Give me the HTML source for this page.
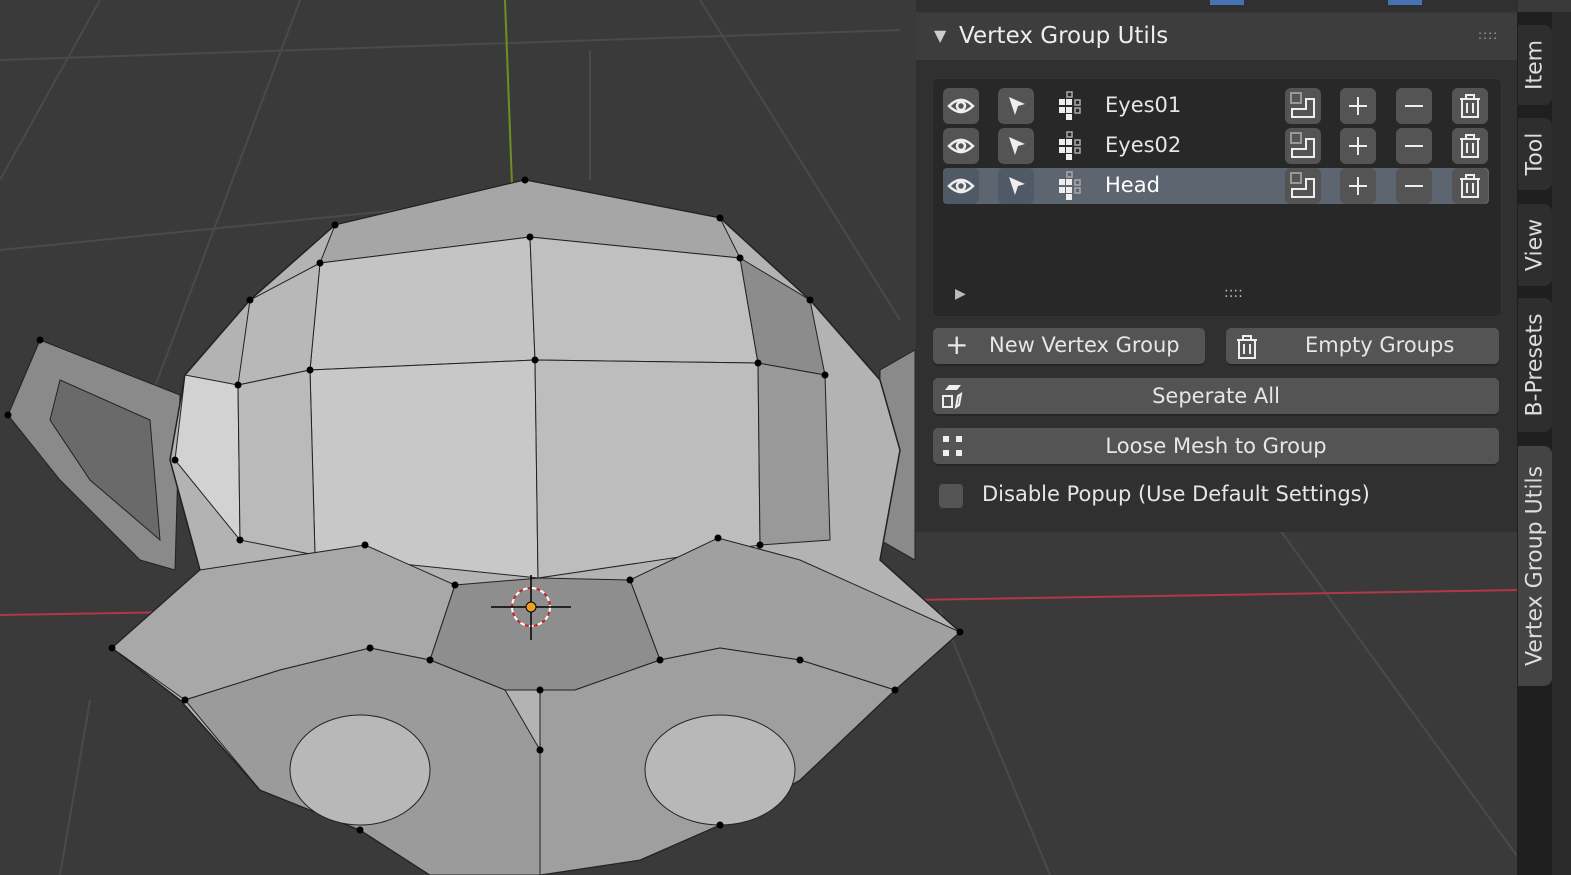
<!DOCTYPE html>
<html><head><style>
body{margin:0;width:1571px;height:875px;overflow:hidden;background:#3a3a3a;font-family:"DejaVu Sans","Liberation Sans",sans-serif;position:relative}
.abs{position:absolute}
.btn{position:absolute;background:#545454;border-radius:5px;color:#e6e6e6;font-size:21px;box-shadow:0 2px 0 #262626}
.ib{position:absolute;width:36px;height:36px;background:#545454;border-radius:6px}
.tab{position:absolute;left:1518px;width:34px;background:#2e2e2e;border-radius:0 8px 8px 0;color:#ddd;font-size:22px}
.tab span{position:absolute;left:50%;top:50%;transform:translate(-50%,-50%) rotate(-90deg);white-space:nowrap}
</style></head><body>
<svg class="abs" style="left:0;top:0" width="1571" height="875">
<g stroke="#4a4a4a" stroke-width="2" fill="none">
<line x1="100" y1="0" x2="0" y2="180"/><line x1="300" y1="0" x2="150" y2="400"/>
<line x1="700" y1="0" x2="900" y2="320"/><line x1="0" y1="250" x2="400" y2="210"/>
<line x1="0" y1="60" x2="900" y2="30"/><line x1="1280" y1="530" x2="1520" y2="860"/>
<line x1="940" y1="610" x2="1050" y2="875"/><line x1="60" y1="875" x2="90" y2="700"/>
<line x1="590" y1="50" x2="590" y2="180"/>
</g>
<line x1="505" y1="0" x2="512" y2="185" stroke="#6f8f22" stroke-width="2"/>
<line x1="0" y1="615" x2="1520" y2="590" stroke="#b03848" stroke-width="2"/>
<line x1="540" y1="840" x2="542" y2="875" stroke="#6f8f22" stroke-width="2"/>
<polygon points="40,340 180,395 175,570 140,560 60,480 8,415" fill="#8a8a8a" stroke="#222"/>
<polygon points="60,380 150,420 160,540 90,480 50,420" fill="#6a6a6a" stroke="#222"/>
<polygon points="880,370 915,350 915,560 880,540" fill="#8a8a8a" stroke="#222"/>
<polygon points="525,180 720,218 810,300 880,380 900,450 880,560 960,632 895,690 800,780 720,825 640,860 540,875 430,875 360,830 260,790 180,700 112,648 200,570 170,460 185,375 250,300 335,225" fill="#b3b3b3" stroke="#222" stroke-width="1.5"/>
<polygon points="525,180 720,218 740,258 530,237 320,263 335,225" fill="#a6a6a6" stroke="#222"/>
<polygon points="320,263 530,237 535,360 310,370" fill="#c4c4c4" stroke="#222"/>
<polygon points="530,237 740,258 758,363 535,360" fill="#c0c0c0" stroke="#222"/>
<polygon points="310,370 535,360 538,578 315,555" fill="#c8c8c8" stroke="#222"/>
<polygon points="535,360 758,363 760,545 538,578" fill="#bdbdbd" stroke="#222"/>
<polygon points="740,258 810,300 825,375 758,363" fill="#8c8c8c" stroke="#222"/>
<polygon points="758,363 825,375 830,540 760,545" fill="#999" stroke="#222"/>
<polygon points="250,300 320,263 310,370 238,385" fill="#b8b8b8" stroke="#222"/>
<polygon points="185,375 238,385 240,540 175,460" fill="#d2d2d2" stroke="#222"/>
<polygon points="238,385 310,370 315,555 240,540" fill="#bababa" stroke="#222"/>
<polygon points="112,648 200,570 365,545 455,585 430,660 370,648 280,670 185,700" fill="#a8a8a8" stroke="#222"/>
<polygon points="630,580 718,538 800,560 960,632 895,690 800,660 720,648 660,660" fill="#a0a0a0" stroke="#222"/>
<polygon points="455,585 540,578 630,580 660,660 575,690 540,690 505,690 430,660" fill="#8e8e8e" stroke="#222"/>
<polygon points="185,700 280,670 370,648 430,660 505,690 540,750 540,875 430,875 360,830 260,790" fill="#9b9b9b" stroke="#222"/>
<polygon points="540,690 575,690 660,660 720,648 800,660 895,690 800,780 720,825 640,860 540,875" fill="#9f9f9f" stroke="#222"/>
<ellipse cx="360" cy="770" rx="70" ry="55" fill="#b8b8b8" stroke="#222"/>
<ellipse cx="720" cy="770" rx="75" ry="55" fill="#b8b8b8" stroke="#222"/>
<g fill="#000">
<circle cx="525" cy="180" r="3.5"/><circle cx="720" cy="218" r="3.5"/><circle cx="530" cy="237" r="3.5"/><circle cx="320" cy="263" r="3.5"/><circle cx="740" cy="258" r="3.5"/><circle cx="335" cy="225" r="3.5"/><circle cx="535" cy="360" r="3.5"/><circle cx="758" cy="363" r="3.5"/><circle cx="310" cy="370" r="3.5"/><circle cx="238" cy="385" r="3.5"/><circle cx="825" cy="375" r="3.5"/><circle cx="240" cy="540" r="3.5"/><circle cx="760" cy="545" r="3.5"/><circle cx="365" cy="545" r="3.5"/><circle cx="718" cy="538" r="3.5"/><circle cx="455" cy="585" r="3.5"/><circle cx="630" cy="580" r="3.5"/><circle cx="112" cy="648" r="3.5"/><circle cx="960" cy="632" r="3.5"/><circle cx="430" cy="660" r="3.5"/><circle cx="660" cy="660" r="3.5"/><circle cx="895" cy="690" r="3.5"/><circle cx="185" cy="700" r="3.5"/><circle cx="540" cy="690" r="3.5"/><circle cx="370" cy="648" r="3.5"/><circle cx="800" cy="660" r="3.5"/><circle cx="540" cy="750" r="3.5"/><circle cx="720" cy="825" r="3.5"/><circle cx="360" cy="830" r="3.5"/><circle cx="40" cy="340" r="3.5"/><circle cx="8" cy="415" r="3.5"/><circle cx="175" cy="460" r="3.5"/><circle cx="250" cy="300" r="3.5"/><circle cx="810" cy="300" r="3.5"/>
</g>
<circle cx="531" cy="607" r="19" fill="none" stroke="#fff" stroke-width="2" stroke-dasharray="5 4"/>
<circle cx="531" cy="607" r="19" fill="none" stroke="#d02020" stroke-width="2" stroke-dasharray="4 5" stroke-dashoffset="4"/>
<line x1="491" y1="607" x2="571" y2="607" stroke="#000" stroke-width="1.5"/><line x1="531" y1="575" x2="531" y2="640" stroke="#000" stroke-width="1.5"/>
<circle cx="531" cy="607" r="5" fill="#f0a020" stroke="#000"/>
</svg>
<div class="abs" style="left:916px;top:0;width:602px;height:12px;background:#303030"></div>
<div class="abs" style="left:1210px;top:0;width:34px;height:5px;background:#4772b3"></div>
<div class="abs" style="left:1388px;top:0;width:34px;height:5px;background:#4772b3"></div>
<div class="abs" style="left:916px;top:14px;width:601px;height:46px;background:#3d3d3d"></div>
<div class="abs" style="left:934px;top:26px;color:#ccc;font-size:16px">▼</div>
<div class="abs" style="left:959px;top:23px;color:#eee;font-size:23px">Vertex Group Utils</div>
<div class="abs" style="left:1478px;top:28px;color:#aaa;font-size:12px;letter-spacing:1px">::::</div>
<div class="abs" style="left:916px;top:60px;width:601px;height:472px;background:#303030"></div>
<div class="abs" style="left:932px;top:78px;width:568px;height:237px;background:#282828;border-radius:6px;border:1px solid #333"></div>
<div class="abs" style="left:943px;top:168px;width:546px;height:36px;background:#5d6570;border-radius:4px"></div>
<div class="abs" style="left:955px;top:286px;color:#bbb;font-size:14px">▶</div>
<div class="abs" style="left:1224px;top:285px;color:#bbb;font-size:14px">::::</div>

<div class="ib" style="left:943px;top:88px"></div><div class="ib" style="left:998px;top:88px"></div>
<div class="ib" style="left:943px;top:128px"></div><div class="ib" style="left:998px;top:128px"></div>
<div class="ib" style="left:943px;top:168px;background:#505a66"></div><div class="ib" style="left:998px;top:168px;background:#505a66"></div>
<div class="ib" style="left:1285px;top:88px"></div><div class="ib" style="left:1340px;top:88px"></div><div class="ib" style="left:1396px;top:88px"></div><div class="ib" style="left:1452px;top:88px"></div>
<div class="ib" style="left:1285px;top:128px"></div><div class="ib" style="left:1340px;top:128px"></div><div class="ib" style="left:1396px;top:128px"></div><div class="ib" style="left:1452px;top:128px"></div>
<div class="ib" style="left:1285px;top:168px"></div><div class="ib" style="left:1340px;top:168px"></div><div class="ib" style="left:1396px;top:168px"></div><div class="ib" style="left:1452px;top:168px"></div>
<svg class="abs" style="left:0;top:0" width="1571" height="875">
<defs>
<g id="eye" fill="none" stroke="#eee" stroke-width="2.5"><path d="M-12 0 Q0 -12 12 0 Q0 12 -12 0Z"/><circle r="4"/></g>
<g id="arr" fill="#eee"><path d="M-7 -9 L9 -2 L2 0 L-1 9Z"/></g>
<g id="grp"><rect x="-14" y="-7" width="6" height="6" fill="#eee"/><rect x="-7" y="-7" width="6" height="6" fill="#eee"/><rect x="-14" y="1" width="6" height="6" fill="#eee"/><rect x="-7" y="1" width="6" height="6" fill="#eee"/><rect x="-6" y="-14" width="5" height="5" fill="none" stroke="#aaa" stroke-width="1.5"/><rect x="-7" y="8" width="6" height="6" fill="#eee"/><rect x="2" y="-6" width="5" height="5" fill="none" stroke="#aaa" stroke-width="1.5"/><rect x="2" y="2" width="5" height="5" fill="none" stroke="#aaa" stroke-width="1.5"/></g>
<g id="cp" fill="none" stroke-width="2"><rect x="-12" y="-13" width="10" height="10" stroke="#999"/><path d="M-11 11 H11 V-7 H3 V3 H-11Z" stroke="#eee"/></g>
<g id="pl" stroke="#eee" stroke-width="2"><path d="M-9 0H9M0 -9V9"/></g>
<g id="mi" stroke="#eee" stroke-width="2"><path d="M-9 0H9"/></g>
<g id="tr" fill="none" stroke="#eee" stroke-width="2"><path d="M-10 -7H10M-4 -7V-11H4V-7M-8 -7V11H8V-7M-3 -3V7M3 -3V7"/></g>
</defs>
<use href="#eye" x="961" y="106"/><use href="#eye" x="961" y="146"/><use href="#eye" x="961" y="186"/>
<use href="#arr" x="1016" y="106"/><use href="#arr" x="1016" y="146"/><use href="#arr" x="1016" y="186"/>
<use href="#grp" x="1073" y="106"/><use href="#grp" x="1073" y="146"/><use href="#grp" x="1073" y="186"/>
<use href="#cp" x="1303" y="106"/><use href="#cp" x="1303" y="146"/><use href="#cp" x="1303" y="186"/>
<use href="#pl" x="1358" y="106"/><use href="#pl" x="1358" y="146"/><use href="#pl" x="1358" y="186"/>
<use href="#mi" x="1414" y="106"/><use href="#mi" x="1414" y="146"/><use href="#mi" x="1414" y="186"/>
<use href="#tr" x="1470" y="106"/><use href="#tr" x="1470" y="146"/><use href="#tr" x="1470" y="186"/>
</svg>
<div class="abs" style="left:1105px;top:93px;color:#e6e6e6;font-size:21px">Eyes01</div>
<div class="abs" style="left:1105px;top:133px;color:#e6e6e6;font-size:21px">Eyes02</div>
<div class="abs" style="left:1105px;top:173px;color:#fff;font-size:21px">Head</div>

<div class="btn" style="left:933px;top:328px;width:272px;height:36px"><span style="position:absolute;left:12px;top:0px;font-size:28px">+</span><span style="position:absolute;left:56px;top:5px">New Vertex Group</span></div>
<div class="btn" style="left:1226px;top:328px;width:273px;height:36px"><svg style="position:absolute;left:9px;top:6px" width="24" height="26"><g transform="translate(12,13)"><use href="#tr"/></g></svg><span style="position:absolute;left:79px;top:5px">Empty Groups</span></div>
<div class="btn" style="left:933px;top:378px;width:566px;height:36px;text-align:center;line-height:36px"><svg style="position:absolute;left:6px;top:4px" width="32" height="30"><path d="M6 8 L10 3 H22 L18 8Z" fill="#eee"/><rect x="4" y="14" width="9" height="11" fill="none" stroke="#eee" stroke-width="2"/><path d="M17 25 L19 14 L22 12 L20 23Z" fill="none" stroke="#eee" stroke-width="2"/></svg>Seperate All</div>
<div class="btn" style="left:933px;top:428px;width:566px;height:36px;text-align:center;line-height:36px"><svg style="position:absolute;left:8px;top:6px" width="26" height="26"><rect x="2" y="2" width="6" height="6" fill="#eee"/><rect x="15" y="2" width="6" height="6" fill="#eee"/><rect x="2" y="16" width="6" height="6" fill="#eee"/><rect x="15" y="16" width="6" height="6" fill="#eee"/></svg>Loose Mesh to Group</div>
<div class="abs" style="left:939px;top:484px;width:24px;height:24px;background:#545454;border-radius:4px"></div>
<div class="abs" style="left:982px;top:482px;color:#e6e6e6;font-size:21px">Disable Popup (Use Default Settings)</div>

<div class="abs" style="left:1517px;top:12px;width:54px;height:863px;background:#1f1f1f"></div>
<div class="abs" style="left:1552px;top:12px;width:19px;height:863px;background:#2a2a2a"></div>
<div class="tab" style="top:25px;height:80px"><span>Item</span></div>
<div class="tab" style="top:118px;height:72px"><span>Tool</span></div>
<div class="tab" style="top:204px;height:82px"><span>View</span></div>
<div class="tab" style="top:298px;height:134px"><span>B-Presets</span></div>
<div class="tab" style="top:446px;height:240px;background:#444"><span>Vertex Group Utils</span></div>
</body></html>
